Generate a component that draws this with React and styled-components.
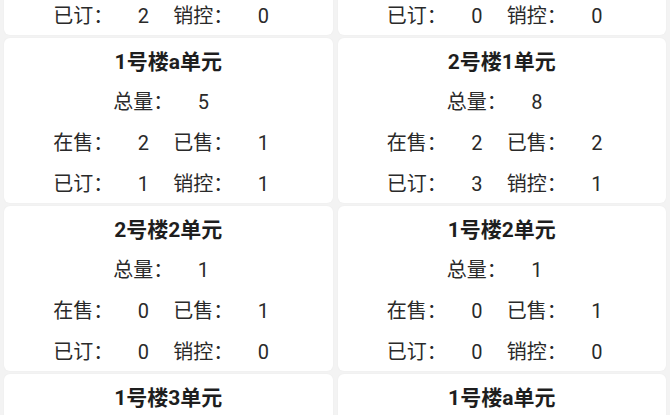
import styled, { createGlobalStyle } from "styled-components";

const GlobalStyle = createGlobalStyle`
  html, body {
    margin: 0;
    padding: 0;
    background: #f3f3f3;
    overflow: hidden;
  }
  body {
    font-family: Roboto, "Noto Sans CJK SC", sans-serif;
    color: #2a2a2a;
  }
`;

const Viewport = styled.div`
  width: 670px;
  height: 415px;
  overflow: hidden;
  background: #f3f3f3;
`;

const Grid = styled.div`
  display: grid;
  grid-template-columns: 1fr 1fr;
  column-gap: 5px;
  row-gap: 3px;
  padding: 0 4px;
  margin-top: -130px;
`;

const Card = styled.div`
  background: #fff;
  border-radius: 6px;
  height: 165px;
  padding-top: 4px;
  box-sizing: border-box;
  display: flex;
  flex-direction: column;
  align-items: center;
  box-shadow: 0 0 2px rgba(0, 0, 0, 0.04);
`;

const Title = styled.div`
  flex-shrink: 0;
  height: 40px;
  line-height: 40px;
  font-size: 21px;
  font-weight: bold;
  color: #1e1e1e;
`;

const Row = styled.div`
  flex-shrink: 0;
  display: grid;
  grid-template-columns: ${(p) => (p.$single ? "60px 60px" : "60px 60px 60px 60px")};
  height: 41px;
  line-height: 41px;
  font-size: 20px;
  padding-left: 10px;
`;

const Label = styled.span`
  color: #2a2a2a;
`;

const Value = styled.span`
  text-align: center;
  color: #2a2a2a;
`;

const units = [
  { name: "1号楼1单元", total: 3, sale: 1, sold: 0, booked: 2, ctrl: 0 },
  { name: "1号楼b单元", total: 2, sale: 1, sold: 1, booked: 0, ctrl: 0 },
  { name: "1号楼a单元", total: 5, sale: 2, sold: 1, booked: 1, ctrl: 1 },
  { name: "2号楼1单元", total: 8, sale: 2, sold: 2, booked: 3, ctrl: 1 },
  { name: "2号楼2单元", total: 1, sale: 0, sold: 1, booked: 0, ctrl: 0 },
  { name: "1号楼2单元", total: 1, sale: 0, sold: 1, booked: 0, ctrl: 0 },
  { name: "1号楼3单元", total: 2, sale: 1, sold: 1, booked: 0, ctrl: 0 },
  { name: "1号楼a单元", total: 4, sale: 2, sold: 1, booked: 1, ctrl: 0 },
];

const UnitCard = ({ u }) => (
  <Card>
    <Title>{u.name}</Title>
    <Row $single>
      <Label>总量：</Label>
      <Value>{u.total}</Value>
    </Row>
    <Row>
      <Label>在售：</Label>
      <Value>{u.sale}</Value>
      <Label>已售：</Label>
      <Value>{u.sold}</Value>
    </Row>
    <Row>
      <Label>已订：</Label>
      <Value>{u.booked}</Value>
      <Label>销控：</Label>
      <Value>{u.ctrl}</Value>
    </Row>
  </Card>
);

const App = () => {
  return (
    <>
      <GlobalStyle />
      <Viewport>
        <Grid>
          {units.map((u, i) => (
            <UnitCard key={i} u={u} />
          ))}
        </Grid>
      </Viewport>
    </>
  );
};

export default App;
